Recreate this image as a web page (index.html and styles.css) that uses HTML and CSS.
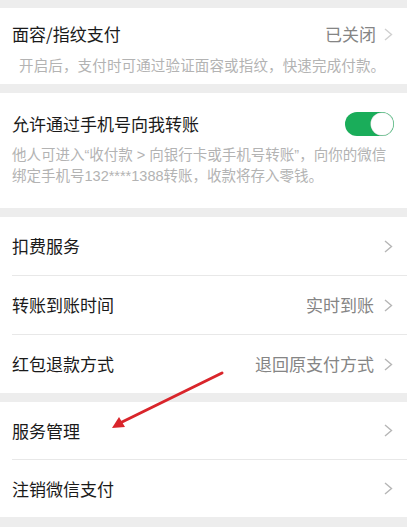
FILE: index.html
```html
<!DOCTYPE html>
<html lang="zh-CN">
<head>
<meta charset="utf-8">
<link rel="stylesheet" href="styles.css">
</head>
<body>
<div class="page">
  <section class="card card-face">
    <div class="row-head">
      <span class="title">面容/指纹支付</span>
      <span class="right"><span class="value">已关闭</span><svg class="chev chev-near" viewBox="0 0 9 13"><path d="M1 1 L7.5 6.5 L1 12"/></svg></span>
    </div>
    <p class="desc desc-indent">开启后，支付时可通过验证面容或指纹，快速完成付款。</p>
  </section>

  <section class="card card-phone">
    <div class="row-head row-toggle">
      <span class="title">允许通过手机号向我转账</span>
      <span class="toggle"><span class="knob"></span></span>
    </div>
    <p class="desc desc-mixed">他人可进入“收付款 &gt; 向银行卡或手机号转账”，向你的微信绑定手机号132****1388转账，收款将存入零钱。</p>
  </section>

  <section class="card list">
    <div class="item"><span class="title">扣费服务</span><span class="right"><svg class="chev" viewBox="0 0 9 13"><path d="M1 1 L7.5 6.5 L1 12"/></svg></span></div>
    <div class="item"><span class="title">转账到账时间</span><span class="right"><span class="value">实时到账</span><svg class="chev" viewBox="0 0 9 13"><path d="M1 1 L7.5 6.5 L1 12"/></svg></span></div>
    <div class="item"><span class="title">红包退款方式</span><span class="right"><span class="value">退回原支付方式</span><svg class="chev" viewBox="0 0 9 13"><path d="M1 1 L7.5 6.5 L1 12"/></svg></span></div>
  </section>

  <section class="card list list-short">
    <div class="item"><span class="title">服务管理</span><span class="right"><svg class="chev" viewBox="0 0 9 13"><path d="M1 1 L7.5 6.5 L1 12"/></svg></span></div>
    <div class="item"><span class="title">注销微信支付</span><span class="right"><svg class="chev" viewBox="0 0 9 13"><path d="M1 1 L7.5 6.5 L1 12"/></svg></span></div>
  </section>

  <svg class="arrow" viewBox="0 0 407 527" width="407" height="527">
    <line x1="222" y1="373" x2="120" y2="423" stroke="#d9252b" stroke-width="3" stroke-linecap="round"/>
    <polygon points="112,428 119,417 125,427" fill="#d9252b"/>
  </svg>
</div>
</body>
</html>
```

FILE: styles.css
```css
html, body {
  margin: 0;
  padding: 0;
}
body {
  background: #ededed;
  font-family: "Noto Sans CJK SC", "Noto Sans", sans-serif;
  color: #191919;
}
.page {
  position: relative;
  width: 407px;
  height: 527px;
  padding-top: 8px;
  box-sizing: border-box;
  overflow: hidden;
}
.card {
  background: #fff;
  margin-bottom: 9px;
}
.card-face {
  padding: 14px 0 9px 12px;
  height: 76px;
  box-sizing: border-box;
}
.card-phone {
  padding: 17px 0 21px 12px;
  height: 115px;
  box-sizing: border-box;
}
.row-head {
  display: flex;
  align-items: center;
  justify-content: space-between;
  height: 24px;
  padding-right: 14px;
}
.row-toggle {
  height: 28px;
  padding-right: 13px;
}
.title {
  font-size: 17px;
  line-height: 24px;
  color: #1a1a1a;
}
.right {
  display: flex;
  align-items: center;
}
.value {
  font-size: 17px;
  line-height: 24px;
  color: #858585;
}
.chev {
  width: 9px;
  height: 13px;
  margin-left: 10px;
  fill: none;
  stroke: #b6b6b6;
  stroke-width: 1.4;
}
.chev-near {
  margin-left: 8px;
  stroke: #d0d0d0;
}
.desc {
  margin: 8px 0 0;
  font-size: 14.5px;
  line-height: 21px;
  color: #b3b3b3;
  padding-right: 18px;
}
.desc-indent {
  padding-left: 7px;
  letter-spacing: 0.15px;
}
.desc-mixed {
  font-family: "Liberation Sans", "Noto Sans CJK SC", sans-serif;
}
.card-phone .desc {
  margin-top: 7px;
}
.toggle {
  position: relative;
  width: 49px;
  height: 24px;
  border-radius: 12px;
  background: #1aad5a;
  display: block;
}
.knob {
  position: absolute;
  right: 1px;
  top: 1px;
  width: 22px;
  height: 22px;
  border-radius: 50%;
  background: #fff;
  box-shadow: 0 0 0 0.5px #d8d8d8;
}
.list .item {
  display: flex;
  align-items: center;
  justify-content: space-between;
  height: 58px;
  padding: 0 14px 0 12px;
  box-sizing: content-box;
}
.list .item + .item {
  border-top: 1px solid #e8e8e8;
  margin-left: 12px;
  padding-left: 0;
}
.list-short .item {
  height: 57px;
}
.arrow {
  position: absolute;
  left: 0;
  top: 0;
  pointer-events: none;
}
```
